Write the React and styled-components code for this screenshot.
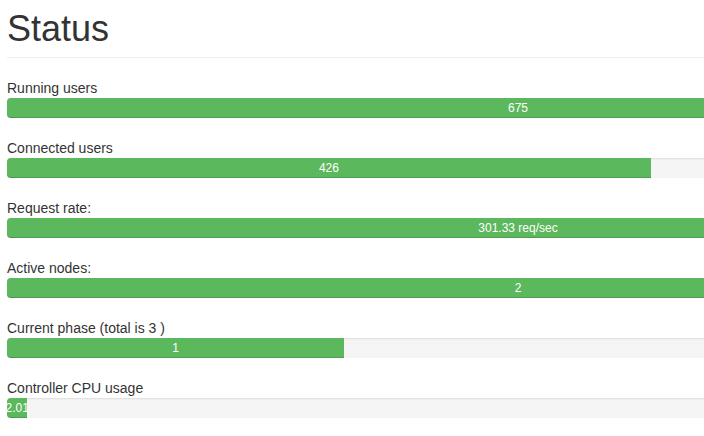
import React from 'react';
import styled, { createGlobalStyle } from 'styled-components';

const GlobalStyle = createGlobalStyle`
  html, body {
    margin: 0;
    padding: 0;
    overflow: hidden;
    background: #fff;
  }
  body {
    font-family: "Liberation Sans", Arial, Helvetica, sans-serif;
    font-size: 14px;
    line-height: 1.42857;
    color: #333;
  }
`;

const Page = styled.div`
  width: 1022px;
  padding: 0 7px;
`;

const PageHeader = styled.div`
  padding-bottom: 9px;
  border-bottom: 1px solid #eee;
  margin-bottom: 18px;
`;

const Title = styled.h1`
  margin: 9px 0 0;
  font-size: 36px;
  font-weight: 500;
  line-height: 39px;
  color: #333;
`;

const Stat = styled.div`
  margin-bottom: 18px;
`;

const Label = styled.div`
  padding-top: 1px;
  height: 21px;
  line-height: 22px;
  color: #333;
`;

const Progress = styled.div`
  display: flex;
  height: 20px;
  overflow: visible;
  background-color: #f5f5f5;
  border-radius: 4px;
  box-shadow: inset 0 1px 2px rgba(0, 0, 0, 0.1);
`;

const Bar = styled.div`
  height: 20px;
  background-color: #5cb85c;
  color: #fff;
  font-size: 12px;
  line-height: 20px;
  text-align: center;
  white-space: nowrap;
  display: flex;
  justify-content: center;
  border-radius: ${(p) => (p.$full ? '4px' : '4px 0 0 4px')};
  box-shadow: inset 0 -1px 0 rgba(0, 0, 0, 0.15);
`;

const stats = [
  { label: 'Running users', value: '675', ratio: 1 },
  { label: 'Connected users', value: '426', ratio: 426 / 675 },
  { label: 'Request rate:', value: '301.33 req/sec', ratio: 1 },
  { label: 'Active nodes:', value: '2', ratio: 1 },
  { label: 'Current phase (total is 3 )', value: '1', ratio: 1 / 3 },
  { label: 'Controller CPU usage', value: '2.01', ratio: 0.0201 },
];

export default function App() {
  return (
    <>
      <GlobalStyle />
      <Page>
        <PageHeader>
          <Title>Status</Title>
        </PageHeader>
        {stats.map((s) => {
          const pct = Math.round(s.ratio * 100);
          return (
            <Stat key={s.label}>
              <Label>{s.label}</Label>
              <Progress>
                <Bar $full={pct >= 100} style={{ width: `${pct}%` }}>
                  {s.value}
                </Bar>
              </Progress>
            </Stat>
          );
        })}
      </Page>
    </>
  );
}
